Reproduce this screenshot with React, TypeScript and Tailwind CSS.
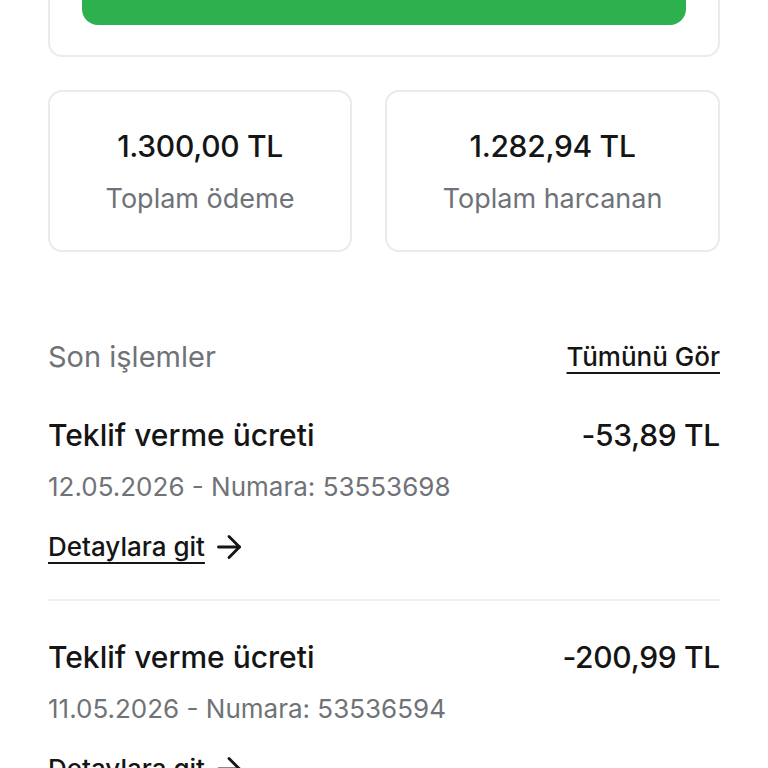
import { ArrowRight } from 'lucide-react';

const transactions = [
  { title: 'Teklif verme ücreti', amount: '-53,89 TL', date: '12.05.2026', no: '53553698' },
  { title: 'Teklif verme ücreti', amount: '-200,99 TL', date: '11.05.2026', no: '53536594' },
];

function StatCard({ value, label }: { value: string; label: string }) {
  return (
    <div className="flex h-[162px] flex-auto flex-col items-center justify-center rounded-[14px] border-2 border-[#ebebeb]">
      <div className="text-[30px] font-medium leading-none tracking-[-0.3px] text-[#151515]">{value}</div>
      <div className="mt-[24px] text-[27px] leading-none text-[#6f7378]">{label}</div>
    </div>
  );
}

export default function App() {
  return (
    <div className="h-[768px] overflow-hidden bg-white px-12" style={{ fontFamily: 'Inter, "Noto Sans", sans-serif' }}>
      {/* top card with the green button */}
      <div className="-mt-[60px] rounded-[14px] border-2 border-[#ebebeb] px-8 pb-[30px] pt-5">
        <div className="h-[63px] rounded-[16px] bg-[#2db14e]" />
      </div>

      {/* totals */}
      <div className="mt-[33px] flex gap-[33px]">
        <StatCard value="1.300,00 TL" label="Toplam ödeme" />
        <StatCard value="1.282,94 TL" label="Toplam harcanan" />
      </div>

      {/* recent transactions */}
      <div className="mt-[90px] flex items-center justify-between">
        <span className="text-[29px] leading-none text-[#6f7378]">Son işlemler</span>
        <span className="text-[26px] font-medium leading-none text-[#151515] underline decoration-2 underline-offset-[6px]">Tümünü Gör</span>
      </div>

      <div className="mt-[49px]">
        {transactions.map((t, i) => (
          <div key={i} className={i > 0 ? 'border-t-2 border-[#f0f0f0] pt-[41px]' : ''}>
            <div className="flex items-center justify-between">
              <span className="text-[30px] font-medium leading-none text-[#151515]">{t.title}</span>
              <span className="text-[30px] font-medium leading-none tracking-[-0.3px] text-[#151515]">{t.amount}</span>
            </div>
            <div className="mt-[24px] text-[26px] leading-none text-[#6f7378]">
              {t.date} - Numara: {t.no}
            </div>
            <div className="mt-[29px] flex items-center gap-[6px] pb-[34px]">
              <span className="text-[26px] font-medium leading-none text-[#151515] underline decoration-2 underline-offset-[6px]">Detaylara git</span>
              <ArrowRight size={36} strokeWidth={1.9} className="text-[#151515]" />
            </div>
          </div>
        ))}
      </div>
    </div>
  );
}
